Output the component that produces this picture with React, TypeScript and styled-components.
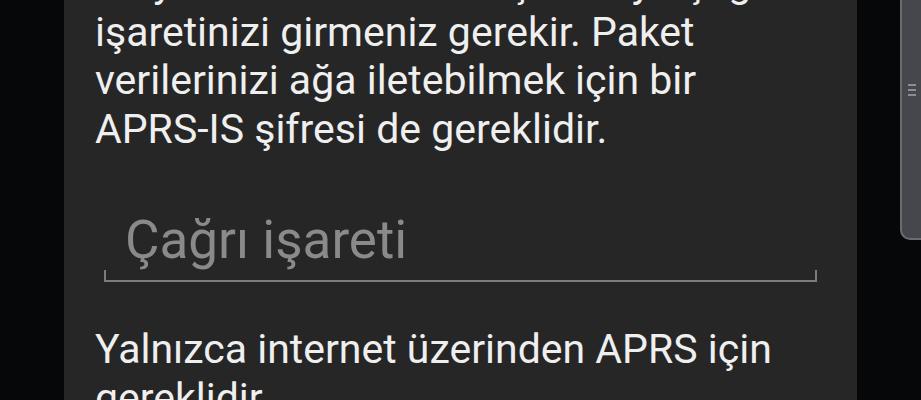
import styled, {createGlobalStyle} from "styled-components";

const GlobalStyle = createGlobalStyle`
    html, body {
        margin: 0;
        padding: 0;
        background-color: #060708;
    }
    #root {
        height: 400px;
        overflow: hidden;
    }
`;

const Screen = styled.div`
    display: flex;
    height: 400px;
    padding-left: 64px;
    font-family: Roboto, "Noto Sans", sans-serif;
`;

const Dialog = styled.div`
    width: 793px;
    flex-shrink: 0;
    background-color: #262626;
    padding: 0 30px 0 31px;
    box-sizing: border-box;
    overflow: hidden;
`;

const Text = styled.p<{ $top: number }>`
    margin: ${p => p.$top}px 0 0 0;
    font-size: 41px;
    line-height: 48.5px;
    color: #efefef;
`;

const NoWrap = styled.span`
    white-space: nowrap;
`;

const Field = styled.div`
    position: relative;
    margin: 47px 10px 0 9px;
    padding: 12px 0 12px 21px;
    border-bottom: 2px solid #7c7c7c;
`;

const Tick = styled.span<{ $side: "left" | "right" }>`
    position: absolute;
    bottom: 0;
    ${p => p.$side}: 0;
    width: 2px;
    height: 10px;
    background-color: #7c7c7c;
`;

const Placeholder = styled.div`
    font-size: 53px;
    line-height: 56px;
    color: #8a8a8a;
`;

const Handle = styled.div`
    margin-left: auto;
    width: 21px;
    height: 240px;
    box-sizing: border-box;
    background-color: #46474c;
    border-left: 2px solid #6b6c71;
    border-bottom: 2px solid #6b6c71;
    border-bottom-left-radius: 10px;
    display: flex;
    flex-direction: column;
    align-items: center;
    justify-content: center;
    gap: 3px;
    padding-bottom: 58px;
`;

const Grip = styled.span`
    width: 8px;
    height: 2px;
    background-color: #8d8e93;
`;

function App() {
    return <>
        <GlobalStyle/>
        <Screen>
            <Dialog>
                <Text $top={-41}>
                    Bu yazılımı kullanmak için radyo çağrı
                    işaretinizi girmeniz gerekir. Paket verilerinizi
                    ağa iletebilmek için bir <NoWrap>APRS-IS</NoWrap> şifresi de gereklidir.
                </Text>
                <Field>
                    <Tick $side="left"/>
                    <Placeholder>Çağrı işareti</Placeholder>
                    <Tick $side="right"/>
                </Field>
                <Text $top={43}>
                    Yalnızca internet üzerinden APRS için gereklidir.
                </Text>
            </Dialog>
            <Handle>
                <Grip/>
                <Grip/>
                <Grip/>
            </Handle>
        </Screen>
    </>
}

export default App;
